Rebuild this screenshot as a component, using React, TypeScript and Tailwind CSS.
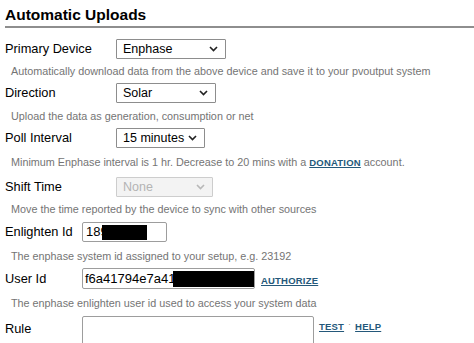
import React from "react";

const Chevron = ({ muted }: { muted?: boolean }) => (
  <svg
    width="9"
    height="6"
    viewBox="0 0 9 6"
    className={muted ? "text-[#b8b8b8]" : "text-[#222]"}
  >
    <polyline
      points="1,1 4.5,4.6 8,1"
      fill="none"
      stroke="currentColor"
      strokeWidth="1.6"
    />
  </svg>
);

const FakeSelect = ({
  value,
  width,
  disabled,
}: {
  value: string;
  width: string;
  disabled?: boolean;
}) => (
  <div
    className={`${width} h-[20px] flex items-center justify-between pl-[6px] pr-[7px] border rounded-[1px] text-[12.5px] ${
      disabled
        ? "bg-[#f3f3f3] border-[#cdcdcd] text-[#b4b4b4]"
        : "bg-white border-[#8d8d8d] text-black"
    }`}
  >
    <span>{value}</span>
    <Chevron muted={disabled} />
  </div>
);

const Link = ({ children }: { children: React.ReactNode }) => (
  <a className="font-bold underline text-[#24587a] text-[9.5px] tracking-[0.2px] cursor-pointer">
    {children}
  </a>
);

const Desc = ({ children, mt }: { children: React.ReactNode; mt: string }) => (
  <div className={`${mt} pl-[6px] text-[10.8px] leading-[14px] text-[#747474] whitespace-nowrap`}>
    {children}
  </div>
);

export default function App() {
  return (
    <div className="w-[474px] h-[343px] overflow-hidden bg-white pl-[5px] pt-[5px] font-['Liberation_Sans',Arial,sans-serif]">
      <div className="h-[23px] border-b-2 border-[#8e8e8e] text-[15.5px] font-bold leading-[20px] text-black">
        Automatic Uploads
      </div>

      {/* Primary device */}
      <div className="mt-[11px] h-[44px]">
        <div className="flex items-center h-[20px]">
          <div className="w-[111px] text-[12.8px]">Primary Device</div>
          <FakeSelect value="Enphase" width="w-[110px]" />
        </div>
        <Desc mt="mt-[5px]">
          Automatically download data from the above device and save it to your pvoutput system
        </Desc>
      </div>

      {/* Direction */}
      <div className="h-[45px]">
        <div className="flex items-center h-[20px]">
          <div className="w-[111px] text-[12.8px]">Direction</div>
          <FakeSelect value="Solar" width="w-[100px]" />
        </div>
        <Desc mt="mt-[6px]">Upload the data as generation, consumption or net</Desc>
      </div>

      {/* Poll interval */}
      <div className="h-[49px]">
        <div className="flex items-center h-[20px]">
          <div className="w-[111px] text-[12.8px]">Poll Interval</div>
          <FakeSelect value="15 minutes" width="w-[89px]" />
        </div>
        <Desc mt="mt-[7px]">
          Minimum Enphase interval is 1 hr. Decrease to 20 mins with a <Link>DONATION</Link> account.
        </Desc>
      </div>

      {/* Shift time */}
      <div className="h-[45px]">
        <div className="flex items-center h-[20px]">
          <div className="w-[111px] text-[12.8px]">Shift Time</div>
          <FakeSelect value="None" width="w-[97px]" disabled />
        </div>
        <Desc mt="mt-[5px]">Move the time reported by the device to sync with other sources</Desc>
      </div>

      {/* Enlighten id */}
      <div className="h-[46px]">
        <div className="flex items-center h-[20px]">
          <div className="w-[77px] text-[12.8px]">Enlighten Id</div>
          <div className="relative w-[85px] h-[20px] border border-[#9d9d9d] rounded-[2px] pl-[3px] text-[13px] leading-[18px] overflow-hidden">
            189
            <span className="absolute left-[19px] top-[2px] w-[45px] h-[15px] bg-black" />
          </div>
        </div>
        <Desc mt="mt-[7px]">The enphase system id assigned to your setup, e.g. 23192</Desc>
      </div>

      {/* User id */}
      <div className="h-[48px]">
        <div className="flex items-center h-[21px]">
          <div className="w-[77px] text-[12.8px]">User Id</div>
          <div className="relative w-[173px] h-[21px] border border-[#9d9d9d] rounded-[2px] pl-[2px] text-[13px] leading-[19px] overflow-hidden">
            f6a41794e7a41
            <span className="absolute left-[90px] top-[2px] w-[81px] h-[16px] bg-black" />
          </div>
          <div className="ml-[6px]">
            <Link>AUTHORIZE</Link>
          </div>
        </div>
        <Desc mt="mt-[7px]">The enphase enlighten user id used to access your system data</Desc>
      </div>

      {/* Rule */}
      <div className="flex items-start">
        <div className="w-[77px] text-[12.8px] mt-[3px]">Rule</div>
        <div className="w-[232px] h-[40px] border border-[#9d9d9d] rounded-[2px]" />
        <div className="ml-[5px] mt-[4px] flex items-center gap-[4px]">
          <Link>TEST</Link>
          <span className="text-[#999] text-[9px] -mt-[4px]">·</span>
          <Link>HELP</Link>
        </div>
      </div>
    </div>
  );
}
